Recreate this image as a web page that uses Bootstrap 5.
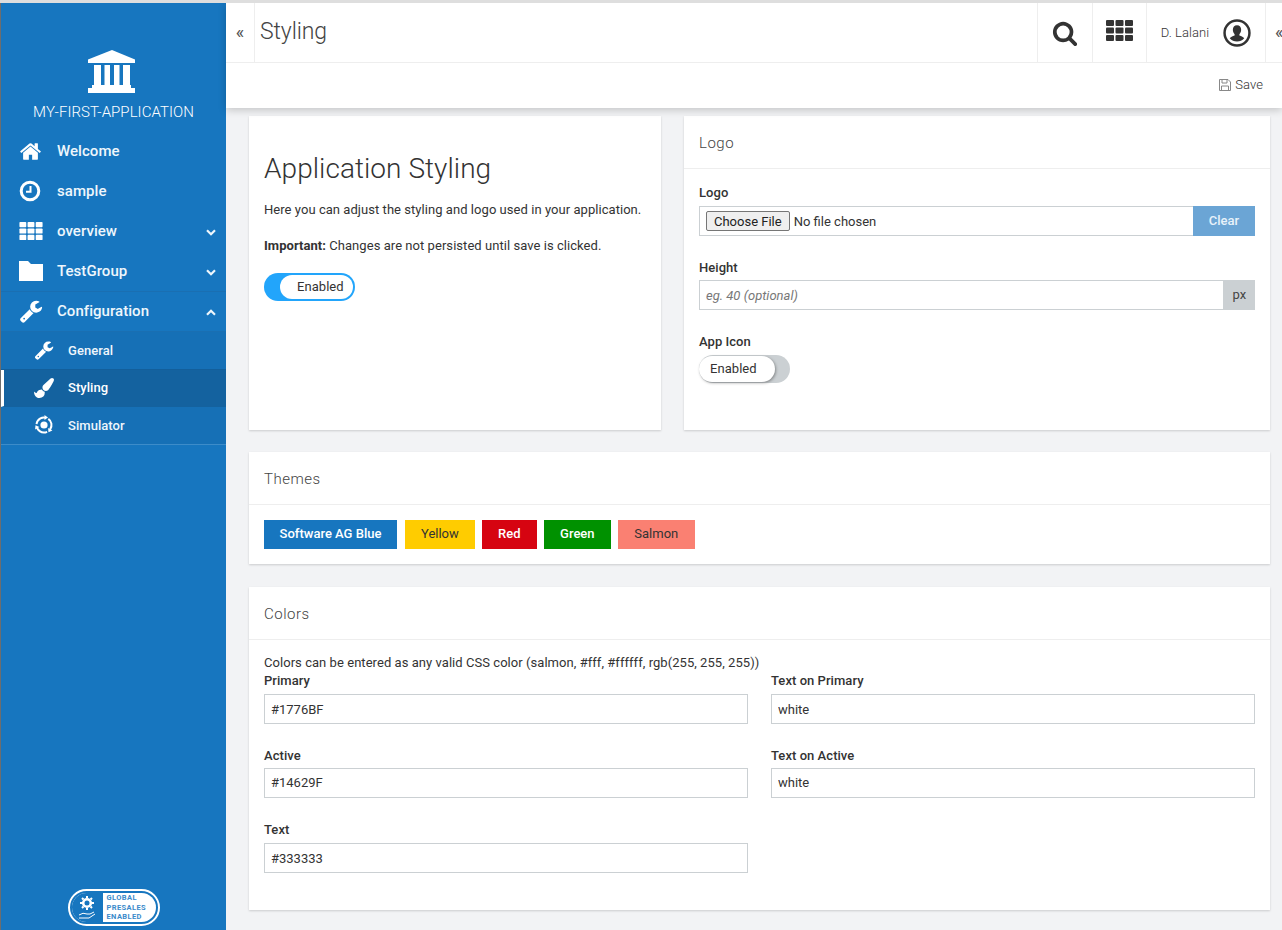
<!DOCTYPE html>
<html lang="en">
<head>
    <meta charset="UTF-8">
    <meta name="viewport" content="width=device-width, initial-scale=1.0">
    <title>Styling</title>
    <link href="https://cdn.jsdelivr.net/npm/bootstrap@5.3.3/dist/css/bootstrap.min.css" rel="stylesheet">
    <style>
        html, body { height: 930px; overflow: hidden; }
        body { background: #f2f3f5; color: #333; font-family: Roboto, "Liberation Sans", sans-serif; font-size: 13px; letter-spacing: .05px; border-top: 3px solid #dedede; }
        .app-shell { height: 927px; }
        .side-panel { width: 226px; flex: none; background: #1776bf; color: #fff; border-left: 1px solid #6d6d6d; }
        .brand-box { height: 129px; padding-top: 47px; text-align: center; }
        .brand-ico { display: block; margin-left: 87px; }
        .brand-name { font-size: 15px; font-weight: 300; line-height: 20px; margin-top: 8px; color: #fff; }
        .side-link { display: flex; align-items: center; color: #eef6fc; text-decoration: none; font-weight: 500; }
        .side-top { height: 40px; font-size: 15px; padding-left: 18px; padding-bottom: 2px; }
        .side-top .side-ico { width: 38px; }
        .side-line { border-bottom: 1px solid #1a6fb2; padding-bottom: 1px; }
        .side-sub { height: 37.500px; font-size: 13px; padding-left: 33px; background: #1670b6; border-bottom: 1px solid #135f9b; }
        .side-sub .side-ico { width: 34px; }
        .side-sub.is-active { background: #14629f; border-left: 3px solid #fff; padding-left: 30px; color: #fff; border-bottom-color: #14629f; }
        .side-sub.is-last { border-bottom-color: #3d8cc9; }
        .side-ico { display: flex; align-items: center; flex: none; }
        .side-chev { margin-left: auto; margin-right: 10px; margin-top: 2px; }
        .side-foot { margin-top: auto; padding-bottom: 4px; }
        .badge-pill { width: 92px; height: 37px; border: 2px solid #fff; border-radius: 19px; background: #1776bf; padding: 2px; }
        .badge-inner { height: 100%; border-radius: 15px; background: #fff; color: #3b8bcb; font-size: 7.5px; font-weight: 700; line-height: 9.500px; letter-spacing: .4px; overflow: hidden; }
        .badge-gear { width: 31px; height: 100%; background: #1776bf; flex: none; }
        .main-col { min-width: 0; }
        .top-head { background: #fff; box-shadow: 0 2px 8px rgba(0, 0, 0, .2); position: relative; z-index: 2; height: 105px; flex: none; }
        .head-row { height: 60px; border-bottom: 1px solid #eee; }
        .head-cell { display: flex; align-items: center; justify-content: center; height: 100%; border-left: 1px solid #eee; }
        .head-back { width: 29px; border-left: 0; border-right: 1px solid #eee; color: #555; font-size: 18px; padding-bottom: 3px; }
        .page-title { font-size: 23px; font-weight: 300; margin: 0 0 0 5px; color: #444; line-height: 1; padding-bottom: 3px; letter-spacing: -.1px; }
        .head-search { width: 55px; }
        .head-grid { width: 54px; }
        .head-user { width: 119px; color: #333; font-size: 13px; font-weight: 300; gap: 14px; padding-top: 1px; }
        .head-more { width: 17px; justify-content: flex-start; padding-left: 9px; color: #555; font-size: 18px; padding-bottom: 3px; }
        .head-tools { height: 44px; padding-right: 19px; color: #333; font-size: 13px; font-weight: 300; gap: 4px; }
        .page-body { padding: 8px 12px 0 23px; }
        .page-row { --bs-gutter-x: 23px; }
        .sheet { border: 0; border-radius: 0; background: #fff; box-shadow: 0 1px 2px rgba(0, 0, 0, .16); margin-bottom: 22px; }
        .sheet-head { height: 53px; padding: 2px 15px 0; display: flex; align-items: center; font-size: 15px; font-weight: 300; color: #444; background: #fff; border-bottom: 1px solid #eee; letter-spacing: .5px; }
        .sheet-top { height: 314px; }
        .sheet-body { padding: 15px; }
        .logo-body { padding-top: 16px; }
        .intro-title { font-size: 28px; font-weight: 300; color: #333; margin: 21px 0 14px; line-height: 34px; }
        .intro-text { margin-bottom: 17px; line-height: 19px; }
        .field-label { display: block; font-weight: 500; font-size: 13px; line-height: 15px; margin-bottom: 6px; color: #333; }
        .field-box { height: 30px; border-radius: 0; border: 1px solid #cbd0d3; font-size: 13px; padding: 0 6px; color: #333; box-shadow: none; }
        .field-box::placeholder { color: #777; font-style: italic; }
        .height-row { margin-top: -1px; }
        .file-box { flex: 1; height: 30px; border: 1px solid #cbd0d3; border-right: 0; padding: 4px 6px 0; display: flex; }
        .file-box input { font-family: Roboto, "Liberation Sans", sans-serif; font-size: 13px; width: 100%; color: #333; }
        .file-box input::file-selector-button { height: 20px; padding: 0 7px; margin-right: 4px; background: #efefef; border: 1px solid #767676; border-radius: 2px; color: #222; }
        .clear-btn { width: 62px; height: 30px; flex: none; padding: 0; border: 0; border-radius: 0; background: #6ba5d5; color: #e8f2fa; font-weight: 500; font-size: 13px; }
        .unit-box { width: 31px; height: 30px; flex: none; background: #cbd0d3; display: flex; align-items: center; justify-content: center; color: #444; }
        .switch-pill { display: flex; width: 91px; height: 28px; border-radius: 14px; font-size: 13px; }
        .switch-on { background: #22a5fb; padding: 2px 2px 2px 16px; margin-top: 18px; }
        .switch-off { background: #cbd0d3; padding: 1px 15px 1px 0; }
        .switch-knob { flex: 1; background: #fff; border-radius: 13px; display: flex; align-items: center; }
        .switch-on .switch-knob { padding-left: 17px; }
        .switch-off .switch-knob { padding-left: 11px; box-shadow: 1px 1px 3px rgba(0, 0, 0, .35); }
        .themes-sheet { margin-bottom: 23px; }
        .theme-list { gap: 7px; }
        .theme-btn { height: 29px; padding: 0 16px 1px; border: 0; border-radius: 0; font-size: 13px; font-weight: 400; line-height: 28px; color: #333; }
        .theme-blue { width: 133px; padding: 0 0 1px; margin-right: 1px; background: #1776bf; color: #fff; font-weight: 500; }
        .theme-yellow { background: #ffcc00; }
        .theme-red { width: 55px; padding: 0 0 1px; background: #d60411; color: #fff; font-weight: 500; }
        .theme-green { width: 67px; padding: 0 0 1px; background: #009100; color: #fff; font-weight: 500; }
        .theme-salmon { width: 77px; padding: 0 0 1px; background: #fa8072; }
        .colors-body { padding-bottom: 13px; }
        .colors-note { line-height: 15px; margin-bottom: 3px; }
        .field-slot { margin-bottom: 23.5px; }
        .active-input { margin-top: -1px; margin-bottom: 1px; }
        .sim-ring { stroke-dasharray: 12.500 3.200; }
    </style>
</head>
<body>
    <svg width="0" height="0" class="d-block">
        <symbol id="ico-grid" viewBox="0 0 27 21">
            <rect x="0" y="0" width="8" height="6" rx="1"/><rect x="9.500" y="0" width="8" height="6" rx="1"/><rect x="19" y="0" width="8" height="6" rx="1"/>
            <rect x="0" y="7.500" width="8" height="6" rx="1"/><rect x="9.500" y="7.500" width="8" height="6" rx="1"/><rect x="19" y="7.500" width="8" height="6" rx="1"/>
            <rect x="0" y="15" width="8" height="6" rx="1"/><rect x="9.500" y="15" width="8" height="6" rx="1"/><rect x="19" y="15" width="8" height="6" rx="1"/>
        </symbol>
        <symbol id="ico-wrench" viewBox="0 0 1792 1792">
            <path d="M448 1472q0-26-19-45t-45-19-45 19-19 45 19 45 45 19 45-19 19-45zm644-420-682 682q-37 37-90 37-52 0-91-37l-106-108q-38-36-38-90 0-53 38-91l681-681q39 98 114.500 173.500t173.500 114.500zm634-435q0 39-23 106-47 134-164.500 217.500t-258.500 83.500q-185 0-316.500-131.500t-131.500-316.500 131.500-316.500 316.500-131.500q58 0 121.500 16.500t107.500 46.500q16 11 16 28t-16 28l-293 169v224l193 107q5-3 79-48.500t135.500-81 70.500-35.500q15 0 23.500 10t8.500 25z"/>
        </symbol>
        <symbol id="ico-down" viewBox="0 0 10 7"><path d="M1 1.200 5 5.200 9 1.200" fill="none" stroke="currentColor" stroke-width="2.200"/></symbol>
        <symbol id="ico-up" viewBox="0 0 10 7"><path d="M1 5.800 5 1.800 9 5.800" fill="none" stroke="currentColor" stroke-width="2.200"/></symbol>
    </svg>
    <div class="app-shell d-flex">
        <aside class="side-panel d-flex flex-column">
            <div class="brand-box">
                <svg width="48" height="44" viewBox="0 0 48 44" fill="#fff" class="brand-ico">
                    <path d="M24 0 47 9.500V13H0V9.500z"/>
                    <rect x="6" y="15" width="7" height="20"/><rect x="16.500" y="15" width="5.500" height="20"/><rect x="26" y="15" width="5.500" height="20"/><rect x="35" y="15" width="7" height="20"/>
                    <rect x="4" y="35" width="39" height="3"/><rect x="0" y="38" width="47" height="5"/>
                </svg>
                <div class="brand-name">MY-FIRST-APPLICATION</div>
            </div>
            <nav class="d-flex flex-column">
                <a class="side-link side-top" href="#">
                    <span class="side-ico"><svg width="23" height="23" viewBox="0 0 1792 1792" fill="#fff"><path d="M1472 992v480q0 26-19 45t-45 19h-384v-384H768v384H384q-26 0-45-19t-19-45V992q0-1 .5-3t.5-3l575-474 575 474q1 2 1 6zm223-69-62 74q-8 9-21 11h-3q-13 0-21-7L896 424l-692 577q-12 8-24 7-13-2-21-11l-62-74q-8-10-7-23.500t11-21.500l719-599q32-26 76-26t76 26l244 204V288q0-14 9-23t23-9h192q14 0 23 9t9 23v408l219 182q10 8 11 21.500t-7 23.500z"/></svg></span>
                    Welcome
                </a>
                <a class="side-link side-top" href="#">
                    <span class="side-ico"><svg width="22" height="22" viewBox="0 0 22 22" fill="none" stroke="#fff"><circle cx="11" cy="11" r="8.800" stroke-width="3"/><path d="M11.500 6v5.800H7" stroke-width="2"/></svg></span>
                    sample
                </a>
                <a class="side-link side-top" href="#">
                    <span class="side-ico"><svg width="24" height="18" fill="#fff"><use href="#ico-grid"/></svg></span>
                    overview
                    <svg class="side-chev" width="10" height="7"><use href="#ico-down"/></svg>
                </a>
                <a class="side-link side-top side-line" href="#">
                    <span class="side-ico"><svg width="24" height="20" viewBox="0 0 24 20" fill="#fff"><path d="M0 0H9l3 3H24v17H0z"/></svg></span>
                    TestGroup
                    <svg class="side-chev" width="10" height="7"><use href="#ico-down"/></svg>
                </a>
                <a class="side-link side-top side-line" href="#">
                    <span class="side-ico"><svg width="24" height="24" fill="#fff"><use href="#ico-wrench"/></svg></span>
                    Configuration
                    <svg class="side-chev" width="10" height="7"><use href="#ico-up"/></svg>
                </a>
                <a class="side-link side-sub" href="#">
                    <span class="side-ico"><svg width="20" height="20" fill="#fff"><use href="#ico-wrench"/></svg></span>
                    General
                </a>
                <a class="side-link side-sub is-active" href="#">
                    <span class="side-ico"><svg width="20" height="20" viewBox="0 0 1792 1792" fill="#fff"><path d="M1615 0q70 0 122.500 46.500t52.500 116.500q0 63-45 151-332 629-465 752-97 91-218 91-126 0-216.500-92.500t-90.500-219.500q0-128 92-212l638-579q59-54 130-54zm-909 1034q39 76 106.500 130t150.500 76l1 71q4 213-129.500 347t-348.500 134q-123 0-218-46.500t-152.500-127.500-86.500-183-29-220q7 5 41 30t62 44.500 59 36.500 46 17q41 0 55-37 25-66 57.500-112.500t69.500-76 88-47.500 103-25.500 125-10.500z"/></svg></span>
                    Styling
                </a>
                <a class="side-link side-sub is-last" href="#">
                    <span class="side-ico"><svg width="20" height="20" viewBox="0 0 20 20" fill="#fff"><circle cx="10" cy="10" r="3.600"/><circle class="sim-ring" cx="10" cy="10" r="7.500" fill="none" stroke="#fff" stroke-width="2" transform="rotate(-55 10 10)"/><path d="M10.500 0l3.500 2.500-3.500 2.500z"/><path d="M10.500 0l3.500 2.500-3.500 2.500z" transform="rotate(120 10 10)"/><path d="M10.500 0l3.500 2.500-3.500 2.500z" transform="rotate(240 10 10)"/></svg></span>
                    Simulator
                </a>
            </nav>
            <div class="side-foot d-flex justify-content-center">
                <div class="badge-pill">
                    <div class="badge-inner d-flex align-items-center">
                        <div class="badge-gear d-flex align-items-center justify-content-center">
                            <svg width="20" height="26" viewBox="0 0 20 26" fill="none" stroke="#fff">
                                <circle cx="10" cy="8" r="3.800" stroke-width="2.600"/>
                                <path d="M10 1v2M10 13v2M3 8h2M15 8h2M5 3l1.500 1.500M13.500 11.500 15 13M15 3l-1.500 1.500M6.500 11.500 5 13" stroke-width="2"/>
                                <path d="M2 20q4-3 8-1h3l4-2M2 23h10l6-4" stroke-width="1"/>
                            </svg>
                        </div>
                        <div class="ps-1">GLOBAL<br>PRESALES<br>ENABLED</div>
                    </div>
                </div>
            </div>
        </aside>
        <div class="main-col flex-grow-1 d-flex flex-column">
            <header class="top-head">
                <div class="head-row d-flex align-items-center">
                    <div class="head-cell head-back">&laquo;</div>
                    <h1 class="page-title">Styling</h1>
                    <div class="head-cell head-search ms-auto">
                        <svg width="26" height="26" viewBox="0 0 1792 1792" fill="#333"><path d="M1216 832q0-185-131.500-316.500t-316.500-131.500-316.500 131.500-131.500 316.500 131.500 316.500 316.500 131.500 316.500-131.500 131.500-316.500zm512 832q0 52-38 90t-90 38q-54 0-90-38l-343-342q-179 124-399 124-143 0-273.500-55.500t-225-150-150-225-55.500-273.500 55.500-273.500 150-225 225-150 273.500-55.500 273.500 55.500 225 150 150 225 55.500 273.500q0 220-124 399l343 343q37 37 37 90z"/></svg>
                    </div>
                    <div class="head-cell head-grid">
                        <svg width="27" height="21" fill="#333" class="mb-1"><use href="#ico-grid"/></svg>
                    </div>
                    <div class="head-cell head-user">
                        <span>D. Lalani</span>
                        <svg width="28" height="28" viewBox="0 0 27 27"><circle cx="13.500" cy="13.500" r="12" fill="none" stroke="#333" stroke-width="2.400"/><path d="M13.500 6c-2.600 0-4 1.900-4 4.400 0 1.800.7 3.200 1.700 4.200v1.300c-2 .8-4 1.500-4.700 2.700a9.500 9.500 0 0 0 14 0c-.7-1.200-2.700-1.900-4.700-2.700v-1.300c1-1 1.700-2.400 1.700-4.200C17.500 7.900 16.100 6 13.500 6z" fill="#333"/></svg>
                    </div>
                    <div class="head-cell head-more">&laquo;</div>
                </div>
                <div class="head-tools d-flex align-items-center justify-content-end">
                    <svg width="12" height="12" viewBox="0 0 12 12" fill="none" stroke="#888"><path d="M.5.500h8.500l2.500 2.500v8.500H.5z"/><path d="M3 .5v3.500h5V.5M2.500 11.500V7h7v4.500"/></svg>
                    <span>Save</span>
                </div>
            </header>
            <main class="page-body flex-grow-1">
                <div class="row page-row">
                    <div class="col-5">
                        <div class="card sheet sheet-top">
                            <div class="sheet-body">
                                <h2 class="intro-title">Application Styling</h2>
                                <p class="intro-text">Here you can adjust the styling and logo used in your application.</p>
                                <p class="intro-text"><strong class="fw-bold">Important:</strong> Changes are not persisted until save is clicked.</p>
                                <div class="switch-pill switch-on"><div class="switch-knob">Enabled</div></div>
                            </div>
                        </div>
                    </div>
                    <div class="col-7">
                        <div class="card sheet sheet-top">
                            <div class="sheet-head">Logo</div>
                            <div class="sheet-body logo-body">
                                <label class="field-label">Logo</label>
                                <div class="d-flex mb-4">
                                    <div class="file-box"><input type="file"></div>
                                    <button type="button" class="btn clear-btn">Clear</button>
                                </div>
                                <label class="field-label">Height</label>
                                <div class="d-flex mb-4 height-row">
                                    <input type="text" class="form-control field-box" placeholder="eg. 40 (optional)">
                                    <div class="unit-box">px</div>
                                </div>
                                <label class="field-label">App Icon</label>
                                <div class="switch-pill switch-off"><div class="switch-knob">Enabled</div></div>
                            </div>
                        </div>
                    </div>
                </div>
                <div class="card sheet themes-sheet">
                    <div class="sheet-head">Themes</div>
                    <div class="sheet-body d-flex theme-list">
                        <button type="button" class="btn theme-btn theme-blue">Software AG Blue</button>
                        <button type="button" class="btn theme-btn theme-yellow">Yellow</button>
                        <button type="button" class="btn theme-btn theme-red">Red</button>
                        <button type="button" class="btn theme-btn theme-green">Green</button>
                        <button type="button" class="btn theme-btn theme-salmon">Salmon</button>
                    </div>
                </div>
                <div class="card sheet">
                    <div class="sheet-head">Colors</div>
                    <div class="sheet-body colors-body">
                        <div class="colors-note">Colors can be entered as any valid CSS color (salmon, #fff, #ffffff, rgb(255, 255, 255))</div>
                        <div class="row page-row">
                            <div class="col-6 field-slot"><label class="field-label">Primary</label><input type="text" class="form-control field-box" value="#1776BF"></div>
                            <div class="col-6 field-slot"><label class="field-label">Text on Primary</label><input type="text" class="form-control field-box" value="white"></div>
                            <div class="col-6 field-slot"><label class="field-label">Active</label><input type="text" class="form-control field-box active-input" value="#14629F"></div>
                            <div class="col-6 field-slot"><label class="field-label">Text on Active</label><input type="text" class="form-control field-box active-input" value="white"></div>
                            <div class="col-6 field-slot"><label class="field-label">Text</label><input type="text" class="form-control field-box" value="#333333"></div>
                        </div>
                    </div>
                </div>
            </main>
        </div>
    </div>
    <script src="https://cdn.jsdelivr.net/npm/bootstrap@5.3.3/dist/js/bootstrap.bundle.min.js"></script>
</body>
</html>
